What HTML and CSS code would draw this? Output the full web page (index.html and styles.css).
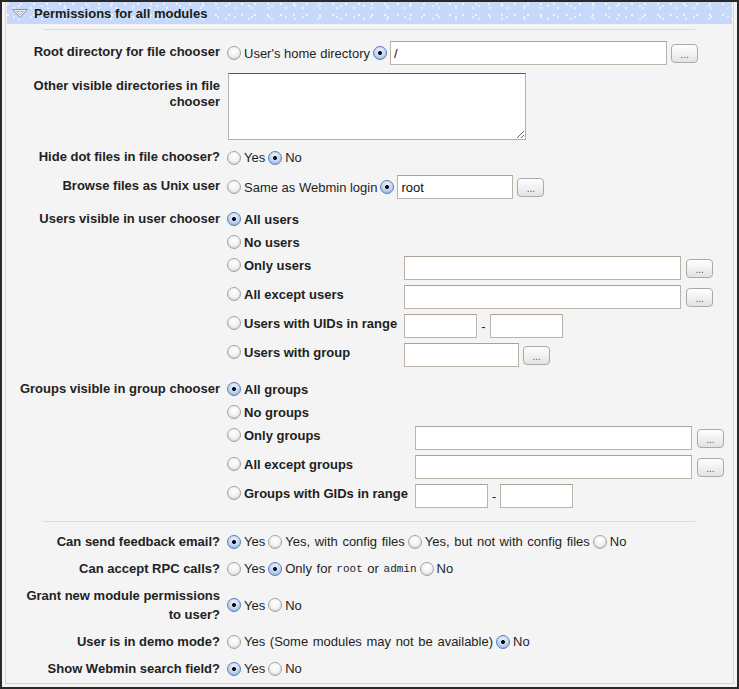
FILE: index.html
```html
<!DOCTYPE html>
<html>
<head>
<meta charset="utf-8">
<title>Permissions for all modules</title>
<link rel="stylesheet" href="styles.css">
</head>
<body>
<div class="frame">
  <div class="panel">
    <div class="panel-head">
      <svg class="twisty" width="16" height="9" viewBox="0 0 16 9"><path d="M0.5 0.5 H15.5 L8 8.5 Z" fill="#e6ecf6" stroke="#8d929b"/><path d="M4.5 2.5 H11.5 L8 6 Z" fill="none" stroke="#b3b8c1"/></svg>
      <span class="head-title">Permissions for all modules</span>
    </div>
    <div class="rule"></div>

    <div class="form form-top">
      <div class="label l-root">Root directory for file chooser</div>
      <div class="value line">
        <label class="opt"><input type="radio" name="root">User's home directory</label>
        <input type="radio" name="root" checked>
        <input type="text" class="text w-long" value="/">
        <button class="pick">...</button>
      </div>

      <div class="label l-other">Other visible directories in file chooser</div>
      <div class="value">
        <textarea class="area"></textarea>
      </div>

      <div class="label l-hide">Hide dot files in file chooser?</div>
      <div class="value line radio-line">
        <label class="opt"><input type="radio" name="dot">Yes</label>
        <label class="opt"><input type="radio" name="dot" checked>No</label>
      </div>

      <div class="label l-browse">Browse files as Unix user</div>
      <div class="value line">
        <label class="opt"><input type="radio" name="unix">Same as Webmin login</label>
        <input type="radio" name="unix" checked>
        <input type="text" class="text w-mid" value="root">
        <button class="pick">...</button>
      </div>

      <div class="label l-block">Users visible in user chooser</div>
      <div class="value">
        <div class="choices">
          <label class="opt b cell"><input type="radio" name="uvis" checked>All users</label>
          <div class="cell"></div>
          <label class="opt b cell"><input type="radio" name="uvis">No users</label>
          <div class="cell"></div>
          <label class="opt b cell"><input type="radio" name="uvis">Only users</label>
          <div class="cell line"><input type="text" class="text w-long"><button class="pick gap5">...</button></div>
          <label class="opt b cell"><input type="radio" name="uvis">All except users</label>
          <div class="cell line"><input type="text" class="text w-long"><button class="pick gap5">...</button></div>
          <label class="opt b cell"><input type="radio" name="uvis">Users with UIDs in range</label>
          <div class="cell line"><input type="text" class="text w-short"><span class="dash">-</span><input type="text" class="text w-short"></div>
          <label class="opt b cell"><input type="radio" name="uvis">Users with group</label>
          <div class="cell line"><input type="text" class="text w-mid2"><button class="pick">...</button></div>
        </div>
      </div>

      <div class="label l-block">Groups visible in group chooser</div>
      <div class="value">
        <div class="choices">
          <label class="opt b cell"><input type="radio" name="gvis" checked>All groups</label>
          <div class="cell"></div>
          <label class="opt b cell"><input type="radio" name="gvis">No groups</label>
          <div class="cell"></div>
          <label class="opt b cell"><input type="radio" name="gvis">Only groups</label>
          <div class="cell line"><input type="text" class="text w-long"><button class="pick gap5">...</button></div>
          <label class="opt b cell"><input type="radio" name="gvis">All except groups</label>
          <div class="cell line"><input type="text" class="text w-long"><button class="pick gap5">...</button></div>
          <label class="opt b cell"><input type="radio" name="gvis">Groups with GIDs in range</label>
          <div class="cell line"><input type="text" class="text w-short"><span class="dash">-</span><input type="text" class="text w-short"></div>
        </div>
      </div>
    </div>

    <div class="rule rule-2"></div>

    <div class="form form-bottom">
      <div class="label">Can send feedback email?</div>
      <div class="value line">
        <label class="opt"><input type="radio" name="fb" checked>Yes</label>
        <label class="opt"><input type="radio" name="fb">Yes, with config files</label>
        <label class="opt"><input type="radio" name="fb">Yes, but not with config files</label>
        <label class="opt"><input type="radio" name="fb">No</label>
      </div>

      <div class="label">Can accept RPC calls?</div>
      <div class="value line">
        <label class="opt"><input type="radio" name="rpc">Yes</label>
        <label class="opt"><input type="radio" name="rpc" checked>Only for&nbsp;<code>root</code>&nbsp;or&nbsp;<code>admin</code></label>
        <label class="opt"><input type="radio" name="rpc">No</label>
      </div>

      <div class="label">Grant new module permissions to user?</div>
      <div class="value line mid">
        <label class="opt"><input type="radio" name="grant" checked>Yes</label>
        <label class="opt"><input type="radio" name="grant">No</label>
      </div>

      <div class="label">User is in demo mode?</div>
      <div class="value line">
        <label class="opt"><input type="radio" name="demo">Yes (Some modules may not be available)</label>
        <label class="opt"><input type="radio" name="demo" checked>No</label>
      </div>

      <div class="label">Show Webmin search field?</div>
      <div class="value line">
        <label class="opt"><input type="radio" name="search" checked>Yes</label>
        <label class="opt"><input type="radio" name="search">No</label>
      </div>
    </div>
  </div>
</div>
</body>
</html>
```

FILE: styles.css
```css
html, body {
  margin: 0;
  padding: 0;
}

body {
  background: #f4f4f4;
  font-family: "Liberation Sans", Arial, sans-serif;
  font-size: 13px;
  color: #1e1e1e;
}

.frame {
  width: 739px;
  height: 689px;
  box-sizing: border-box;
  border: 2px solid #2a2a2a;
  padding: 0 3px 3px 3px;
  background: #f4f4f4;
}

.panel {
  height: 100%;
  box-sizing: border-box;
  border: 1px solid #d7d7cf;
  border-top: none;
}

.panel-head {
  margin: 0 1px;
  height: 22px;
  display: flex;
  align-items: center;
  padding-left: 5px;
  background-color: #c6d9fb;
  background-image:
    radial-gradient(circle at 1px 1px, rgba(255,255,255,0.85) 0.6px, rgba(255,255,255,0) 1.2px),
    radial-gradient(circle at 1px 1px, rgba(255,255,255,0.75) 0.6px, rgba(255,255,255,0) 1.2px),
    radial-gradient(circle at 1px 1px, rgba(255,255,255,0.7) 0.6px, rgba(255,255,255,0) 1.2px);
  background-size: 13px 11px, 17px 9px, 23px 13px;
  background-position: 0 1px, 6px 5px, 11px 3px;
}

.twisty {
  display: block;
  flex: none;
}

.head-title {
  margin-left: 6px;
  font-weight: bold;
  font-size: 13px;
  color: #1a1a1a;
}

.rule {
  margin: 5px 0 0 37px;
  width: 652px;
  height: 1px;
  background: #dcdcd3;
}

.rule-2 {
  margin-top: 11px;
}

.form {
  display: grid;
  grid-template-columns: 205px 1fr;
  column-gap: 7px;
  padding-left: 9px;
  align-items: start;
}

.form-top {
  margin-top: 11px;
  row-gap: 8px;
}

.form-bottom {
  margin-top: 6px;
}

.label {
  font-weight: bold;
  text-align: right;
  color: #222;
  line-height: 16px;
}

.l-root { padding-top: 3px; }
.l-other { padding-top: 5px; }
.l-hide { padding-top: 1px; }
.l-browse { padding-top: 3px; }
.l-block { padding-top: 4px; }

.form-bottom .label {
  line-height: 19px;
  padding: 4px 0;
}

.form-bottom .value {
  height: 19px;
  padding: 4px 0;
  word-spacing: 1px;
}

.form-bottom .value.mid {
  align-self: center;
}

.value {
  min-width: 0;
}

.line {
  display: flex;
  align-items: center;
}

.radio-line {
  height: 19px;
}

.opt {
  display: inline-flex;
  align-items: center;
  margin-right: 3px;
  white-space: nowrap;
}

.opt.b {
  font-weight: bold;
}

input[type="radio"] {
  -webkit-appearance: none;
  appearance: none;
  flex: none;
  width: 14px;
  height: 14px;
  margin: 0 3px 0 0;
  box-sizing: border-box;
  border-radius: 50%;
  border: 1px solid #a3a3a3;
  background: radial-gradient(circle at 50% 35%, #ffffff 0, #f4f4f4 45%, #d9d9d9 100%);
  box-shadow: inset 0 -1px 1px rgba(0,0,0,0.08);
}

input[type="radio"]:checked {
  border-color: #5a7db5;
  background:
    radial-gradient(circle, #111 0, #111 1.6px, rgba(17,17,17,0) 2.3px),
    radial-gradient(circle at 50% 30%, #e8f0fc 0, #c5d8f4 50%, #98b7e6 100%);
}

.text {
  height: 24px;
  box-sizing: border-box;
  border: 1px solid #bcb3a8;
  border-top-color: #a9a096;
  background: #fff;
  font-family: "Liberation Sans", Arial, sans-serif;
  font-size: 13px;
  color: #111;
  padding: 0 3px;
  margin: 0;
}

.w-long { width: 277px; }
.w-mid { width: 116px; }
.w-mid2 { width: 115px; }
.w-short { width: 73px; }

.area {
  display: block;
  width: 298px;
  height: 67px;
  box-sizing: border-box;
  margin: 0 0 0 1px;
  border: 1px solid #b9b0a5;
  border-top-color: #5d5656;
  background: #fff;
  font-family: "Liberation Sans", Arial, sans-serif;
  font-size: 13px;
}

.pick {
  width: 27px;
  height: 19px;
  margin: 0 0 0 4px;
  padding: 0 0 2px 0;
  box-sizing: border-box;
  border: 1px solid #a9a9a9;
  border-radius: 4px;
  background: linear-gradient(#ffffff, #eeeeee 60%, #e2e2e2);
  font-family: "Liberation Sans", Arial, sans-serif;
  font-size: 10px;
  line-height: 10px;
  color: #3b5584;
  display: flex;
  align-items: flex-end;
  justify-content: center;
}

.pick.gap5 {
  margin-left: 5px;
}

.dash {
  margin: 0 4px;
}

.choices {
  display: grid;
  grid-template-columns: max-content max-content;
  column-gap: 7px;
  align-items: start;
}

.choices .cell {
  padding: 3px 0 2px 0;
  margin-right: 0;
}

.choices .opt.cell {
  height: 18px;
}

code {
  font-family: "Liberation Mono", "Courier New", monospace;
  font-size: 11px;
  word-spacing: 0;
}
```
